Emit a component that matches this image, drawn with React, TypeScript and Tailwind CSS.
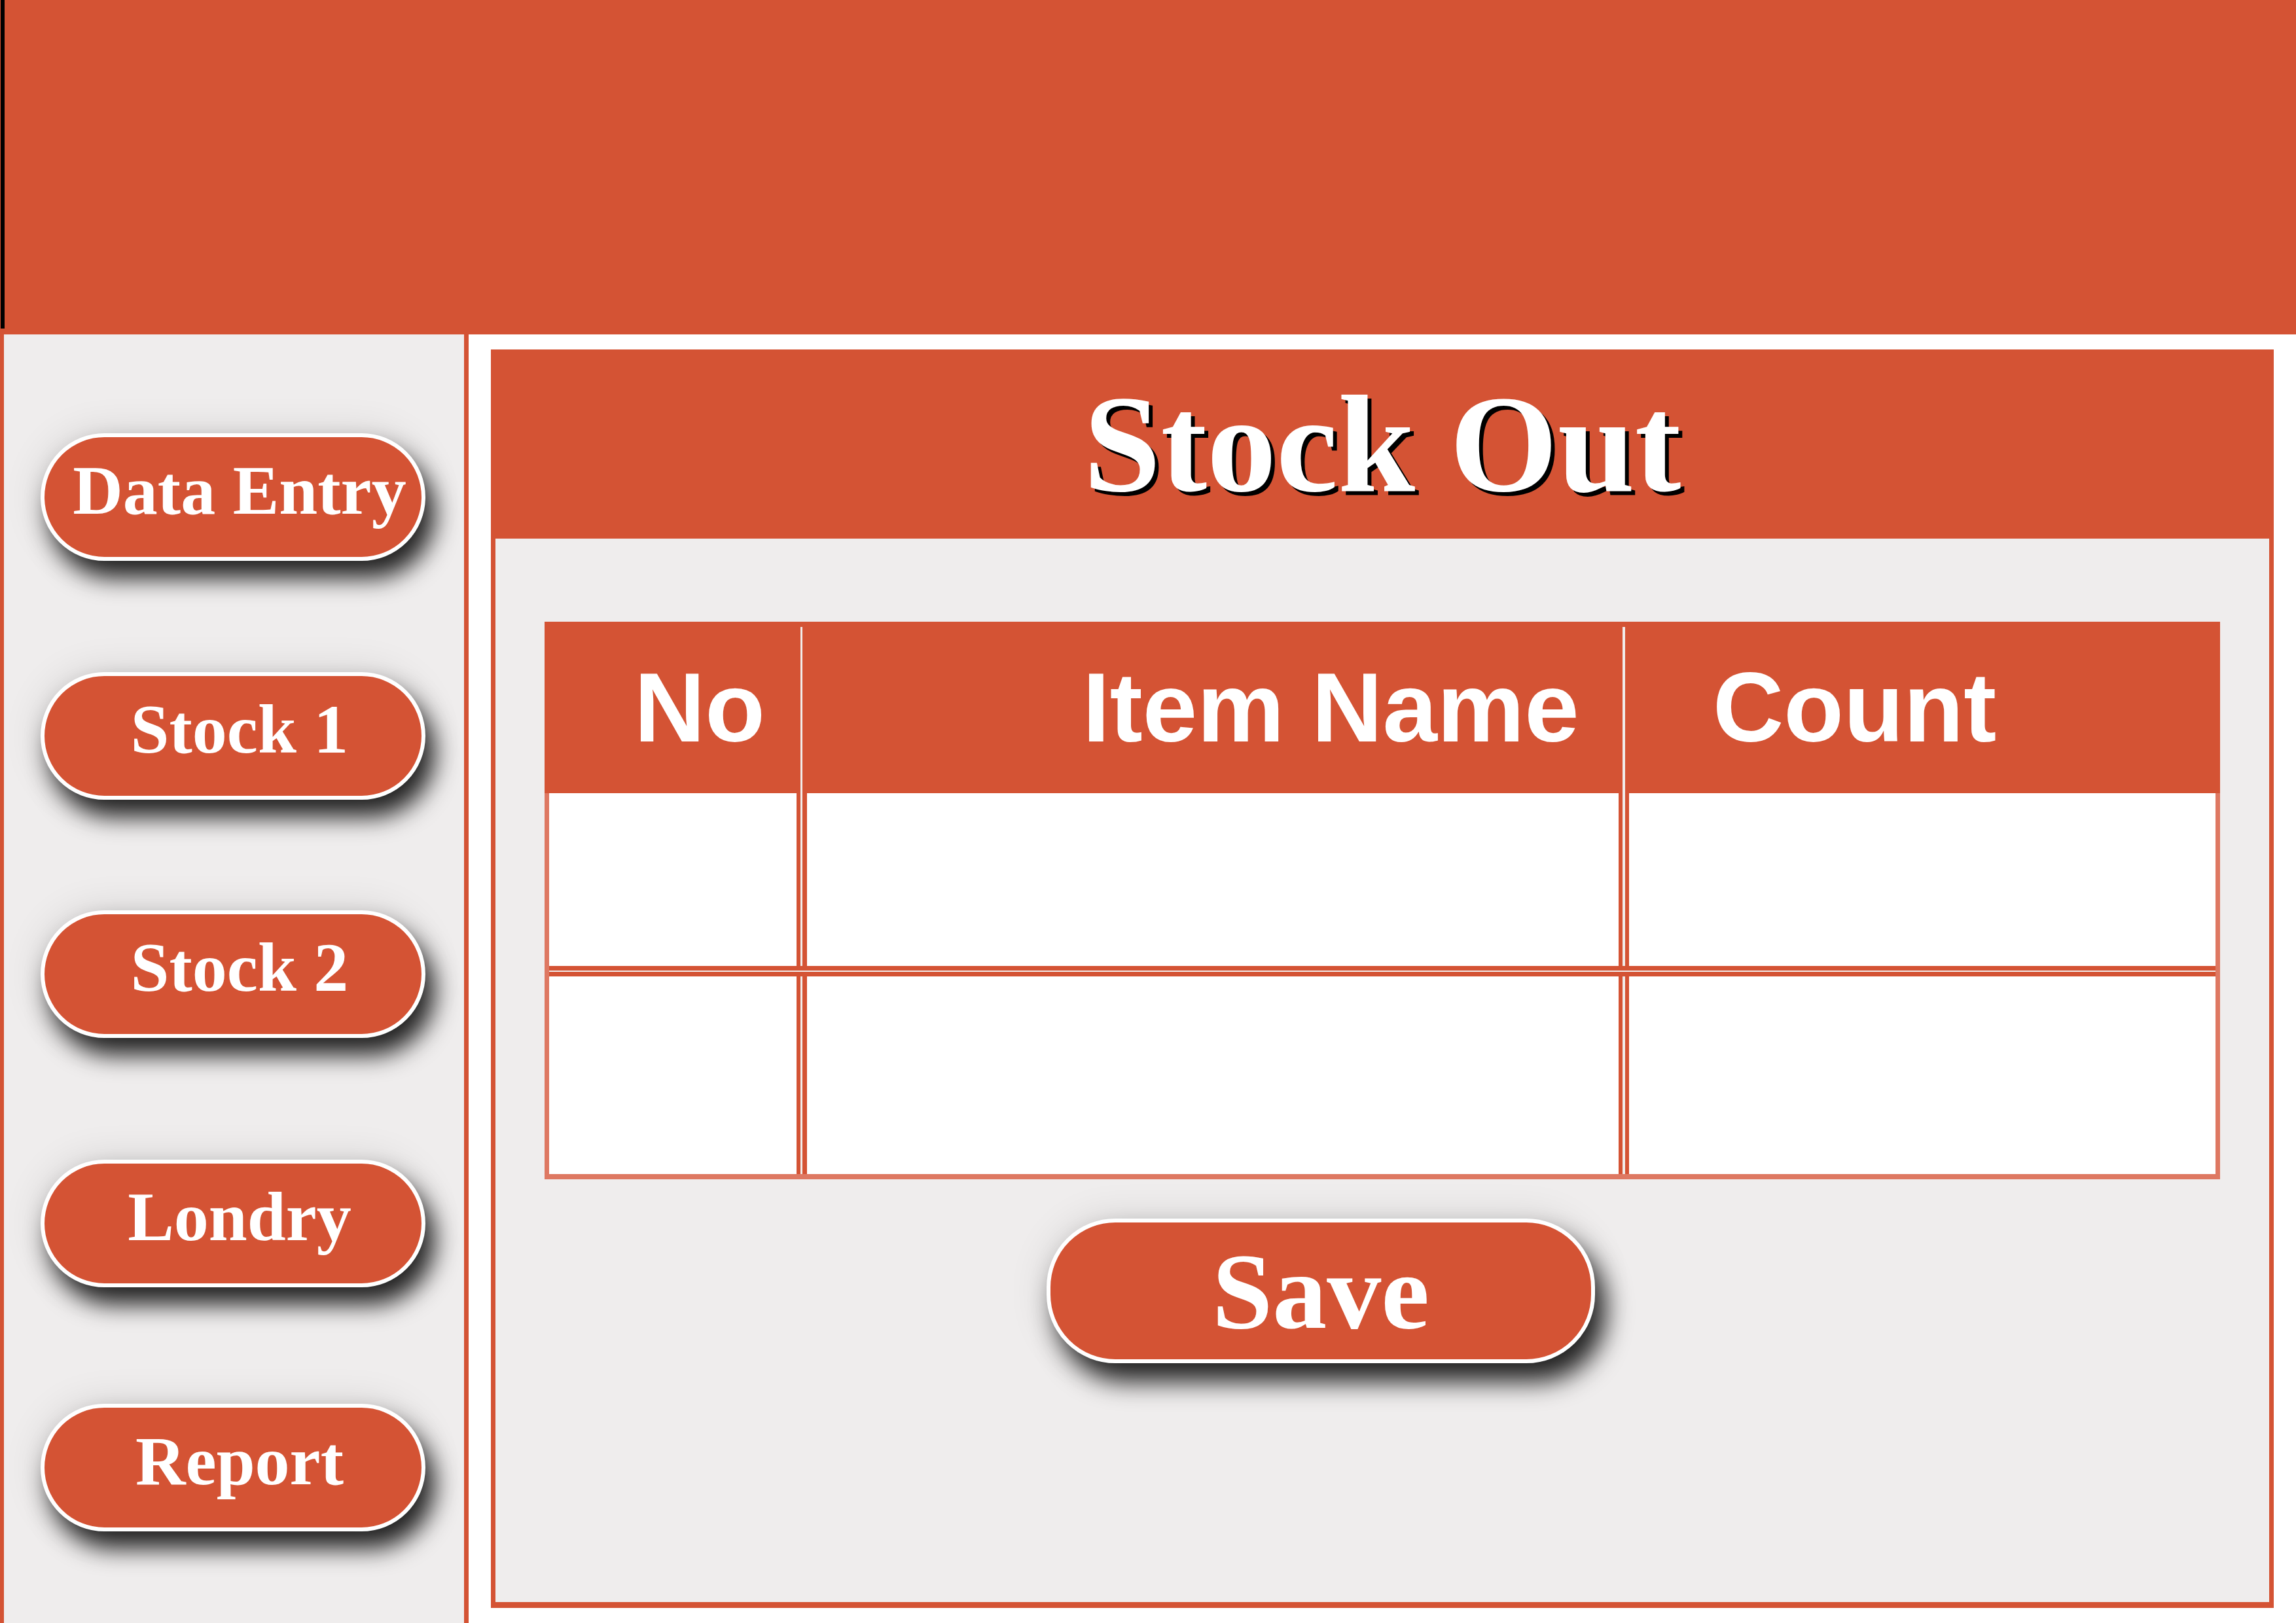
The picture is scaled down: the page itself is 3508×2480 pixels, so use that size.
const ORANGE = 'bg-[#d45334]'

type NavItem = { label: string; mt: string }

const navItems: NavItem[] = [
  { label: 'Data Entry', mt: 'mt-[151px]' },
  { label: 'Stock 1', mt: 'mt-[170px]' },
  { label: 'Stock 2', mt: 'mt-[169px]' },
  { label: 'Londry', mt: 'mt-[186px]' },
  { label: 'Report', mt: 'mt-[178px]' },
]

function NavButton({ label, mt }: NavItem) {
  return (
    <button
      className={`${mt} ml-[56px] w-[588px] h-[195px] shrink-0 rounded-full border-[6px] border-white ${ORANGE} text-white font-bold text-[106px] leading-none flex items-center justify-center pl-[20px] pb-[20px] shadow-[14px_26px_36px_rgba(0,0,0,0.85),0_0_60px_rgba(0,0,0,0.12)]`}
      style={{ fontFamily: '"Liberation Serif", "Times New Roman", serif' }}
    >
      {label}
    </button>
  )
}

// body cell row with the double-line column dividers
function BodyRow({ height }: { height: string }) {
  return (
    <div className={`flex ${height}`}>
      <div className="w-[378px] bg-white" />
      <div className="w-[16px] bg-[#d45334] flex justify-start">
        <div className="ml-[6px] w-[3px] bg-[#f1ecea]" />
      </div>
      <div className="w-[1240px] bg-white" />
      <div className="w-[16px] bg-[#d45334] flex justify-start">
        <div className="ml-[6px] w-[4px] bg-[#f1ecea]" />
      </div>
      <div className="flex-1 bg-white" />
    </div>
  )
}

function StockTable() {
  const head = { fontFamily: '"Liberation Sans", Arial, sans-serif' }
  return (
    <div className="w-[2560px]">
      {/* header */}
      <div className={`flex h-[262px] ${ORANGE} text-white font-bold text-[150px] leading-none`} style={head}>
        <div className="w-[391px] flex items-center pl-[137px]">No</div>
        <div className="w-[3px] mt-[8px] bg-[#f1ecea]" />
        <div className="w-[1253px] flex items-center pl-[428px]">Item Name</div>
        <div className="w-[4px] mt-[8px] bg-[#f1ecea]" />
        <div className="flex-1 flex items-center pl-[134px]">Count</div>
      </div>
      {/* body */}
      <div className="border-x-[7px] border-b-[8px] border-[#de7862]">
        <BodyRow height="h-[264px]" />
        <div className="h-[16px] bg-[#d45334] flex flex-col">
          <div className="mt-[7px] h-[2px] bg-[#f1ecea]" />
        </div>
        <BodyRow height="h-[302px]" />
      </div>
    </div>
  )
}

export default function App() {
  return (
    <div className="w-[3508px] h-[2480px] bg-white flex flex-col overflow-hidden">
      {/* top bar */}
      <div className={`h-[511px] shrink-0 ${ORANGE} flex`}>
        <div className="ml-[1px] w-[6px] h-[502px] bg-black" />
      </div>

      <div className="flex flex-1 min-h-0">
        {/* sidebar */}
        <aside className="w-[716px] shrink-0 bg-[#efeded] border-l-[6px] border-r-[7px] border-[#d45334] flex flex-col">
          {navItems.map(item => (
            <NavButton key={item.label} {...item} />
          ))}
        </aside>

        {/* main */}
        <main className="flex-1 pl-[34px] pt-[23px]">
          <div className="w-[2724px] h-[1923px] border-x-[7px] border-b-[9px] border-[#d45334] bg-[#efeded] flex flex-col">
            <div className={`h-[289px] shrink-0 ${ORANGE} flex items-center justify-center`}>
              <h1
                className="text-white font-bold text-[212px] leading-none [text-shadow:6px_6px_0_#000]"
                style={{ fontFamily: '"Liberation Serif", "Times New Roman", serif' }}
              >
                Stock Out
              </h1>
            </div>

            <div className="pl-[75px] pt-[127px] flex flex-col">
              <StockTable />
              <button
                className={`mt-[60px] ml-[767px] w-[838px] h-[221px] rounded-[105px] border-[6px] border-white ${ORANGE} text-white font-bold text-[166px] leading-none flex items-center justify-center shadow-[16px_28px_38px_rgba(0,0,0,0.85),0_0_60px_rgba(0,0,0,0.12)]`}
                style={{ fontFamily: '"Liberation Serif", "Times New Roman", serif' }}
              >
                Save
              </button>
            </div>
          </div>
        </main>
      </div>
    </div>
  )
}
